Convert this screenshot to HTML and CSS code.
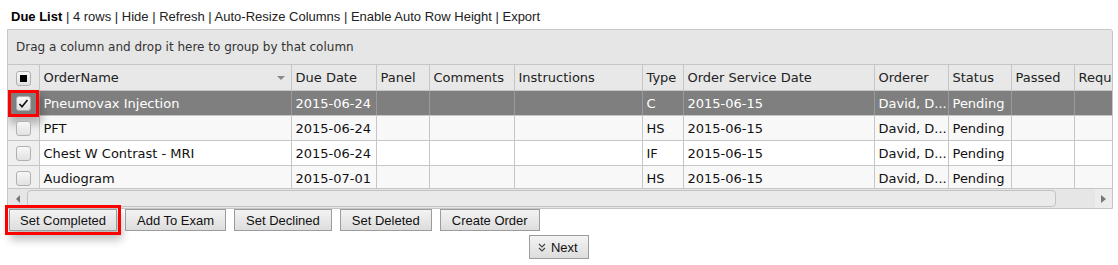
FILE: index.html
```html
<!DOCTYPE html>
<html>
<head>
  <title>Due List</title>
  <link rel="stylesheet" href="styles.css">
</head>
<body>
  <div class="toolbar">
    <b>Due List</b> | <a>4 rows</a> | <a>Hide</a> | <a>Refresh</a> | <a>Auto-Resize Columns</a> | <a>Enable Auto Row Height</a> | <a>Export</a>
  </div>

  <div class="grid">
    <div class="group-panel">Drag a column and drop it here to group by that column</div>
    <div class="grid-view">
      <table class="grid-table">
        <colgroup>
          <col style="width:31px">
          <col style="width:252px">
          <col style="width:85px">
          <col style="width:53px">
          <col style="width:85px">
          <col style="width:128px">
          <col style="width:41px">
          <col style="width:191px">
          <col style="width:74px">
          <col style="width:63px">
          <col style="width:63px">
          <col style="width:120px">
        </colgroup>
        <thead>
          <tr>
            <th class="chk-cell"><span class="checkbox partial"></span></th>
            <th class="sortable">OrderName <span class="sort-arrow"></span></th>
            <th>Due Date</th>
            <th>Panel</th>
            <th>Comments</th>
            <th>Instructions</th>
            <th>Type</th>
            <th>Order Service Date</th>
            <th>Orderer</th>
            <th>Status</th>
            <th>Passed</th>
            <th>Requested</th>
          </tr>
        </thead>
        <tbody>
          <tr class="selected">
            <td class="chk-cell"><span class="checkbox checked marked">
              <svg width="11" height="11" viewBox="0 0 11 11"><path d="M1.5 6 L4 8.8 L9.5 2" fill="none" stroke="#111" stroke-width="1.6"/></svg>
            </span></td>
            <td>Pneumovax Injection</td>
            <td>2015-06-24</td>
            <td></td>
            <td></td>
            <td></td>
            <td>C</td>
            <td>2015-06-15</td>
            <td>David, D...</td>
            <td>Pending</td>
            <td></td>
            <td></td>
          </tr>
          <tr class="alt">
            <td class="chk-cell"><span class="checkbox"></span></td>
            <td>PFT</td>
            <td>2015-06-24</td>
            <td></td>
            <td></td>
            <td></td>
            <td>HS</td>
            <td>2015-06-15</td>
            <td>David, D...</td>
            <td>Pending</td>
            <td></td>
            <td></td>
          </tr>
          <tr>
            <td class="chk-cell"><span class="checkbox"></span></td>
            <td>Chest W Contrast - MRI</td>
            <td>2015-06-24</td>
            <td></td>
            <td></td>
            <td></td>
            <td>IF</td>
            <td>2015-06-15</td>
            <td>David, D...</td>
            <td>Pending</td>
            <td></td>
            <td></td>
          </tr>
          <tr class="alt">
            <td class="chk-cell"><span class="checkbox"></span></td>
            <td>Audiogram</td>
            <td>2015-07-01</td>
            <td></td>
            <td></td>
            <td></td>
            <td>HS</td>
            <td>2015-06-15</td>
            <td>David, D...</td>
            <td>Pending</td>
            <td></td>
            <td></td>
          </tr>
        </tbody>
      </table>
    </div>
    <div class="hscroll">
      <span class="scroll-btn"><span class="arrow-left"></span></span>
      <span class="scroll-thumb"></span>
      <span class="scroll-btn right"><span class="arrow-right"></span></span>
    </div>
  </div>

  <div class="actions">
    <button class="btn marked">Set Completed</button>
    <button class="btn">Add To Exam</button>
    <button class="btn">Set Declined</button>
    <button class="btn">Set Deleted</button>
    <button class="btn">Create Order</button>
  </div>

  <div class="pager">
    <button class="btn next">
      <svg width="8" height="9" viewBox="0 0 8 9"><path d="M1 1 L4 4 L7 1 M1 5 L4 8 L7 5" fill="none" stroke="#444" stroke-width="1.1"/></svg>
      Next
    </button>
  </div>
</body>
</html>
```

FILE: styles.css
```css
body {
  margin: 0;
  font-family: "Liberation Sans", Arial, sans-serif;
  background: #fff;
  color: #111;
}

.toolbar {
  padding: 9px 0 0 11px;
  height: 20px;
  font-size: 13px;
  line-height: 16px;
  color: #222;
}

.toolbar b {
  color: #000;
}

.grid {
  margin-left: 7px;
  width: 1104px;
  border: 1px solid #c6c6c6;
  border-top-right-radius: 3px;
  background: #e6e6e6;
  font-family: "DejaVu Sans", Verdana, sans-serif;
  font-size: 13px;
}

.group-panel {
  height: 34px;
  line-height: 34px;
  padding-left: 8px;
  font-size: 12px;
  color: #333;
  border-bottom: 1px solid #c6c6c6;
}

.grid-view {
  height: 123px;
  overflow: hidden;
}

.grid-table {
  table-layout: fixed;
  width: 1186px;
  border-collapse: collapse;
}

.grid-table th,
.grid-table td {
  border-left: 1px solid #c6c6c6;
  border-bottom: 1px solid #c6c6c6;
  padding: 0 4px;
  text-align: left;
  white-space: nowrap;
  overflow: hidden;
}

.grid-table th {
  height: 25px;
  font-weight: normal;
  color: #222;
  background: #e8e8e8;
}

.grid-table td {
  height: 24px;
  background: #fff;
  color: #111;
}

.grid-table tr.alt td {
  background: #f8f8f8;
}

.grid-table tr.selected td {
  background: #7f7f7f;
  color: #fff;
  border-left-color: #9a9a9a;
}

.grid-table .chk-cell {
  border-left: none;
  padding: 0;
  text-align: center;
  overflow: visible;
}

.grid-table td.chk-cell,
.grid-table tr.alt td.chk-cell {
  background: #efefef;
}

.sortable {
  position: relative;
}

.sort-arrow {
  position: absolute;
  right: 6px;
  top: 11px;
  border-left: 4px solid transparent;
  border-right: 4px solid transparent;
  border-top: 4px solid #8a8a8a;
}

.checkbox {
  display: inline-block;
  width: 13px;
  height: 13px;
  border: 1px solid #b0b0b0;
  border-radius: 3px;
  background: linear-gradient(#f7f7f7, #e2e2e2);
  vertical-align: middle;
  position: relative;
}

.checkbox.partial::after {
  content: "";
  position: absolute;
  left: 3px;
  top: 3px;
  width: 7px;
  height: 7px;
  background: #000;
}

.checkbox svg {
  position: absolute;
  left: 1px;
  top: 1px;
}

.checkbox.marked::before {
  content: "";
  position: absolute;
  left: -9px;
  right: -9px;
  top: -7px;
  bottom: -7px;
  border: 3px solid #f00;
  box-shadow: 2px 6px 8px 1px rgba(0, 0, 0, 0.25);
}

.hscroll {
  display: flex;
  height: 19px;
  align-items: center;
  border-top: 1px solid #c6c6c6;
}

.scroll-btn {
  width: 19px;
  height: 19px;
  display: flex;
  align-items: center;
  justify-content: center;
}

.scroll-btn.right {
  width: 17px;
  margin-left: 39px;
  background: #ececec;
}

.arrow-left {
  border-top: 4px solid transparent;
  border-bottom: 4px solid transparent;
  border-right: 4px solid #777;
}

.arrow-right {
  border-top: 4px solid transparent;
  border-bottom: 4px solid transparent;
  border-left: 5px solid #777;
}

.scroll-thumb {
  flex: 1;
  height: 15px;
  border: 1px solid #c2c2c2;
  border-radius: 4px;
  background: #eaeaea;
}

.actions {
  display: flex;
  gap: 8px;
  padding: 0 0 0 9px;
}

.btn {
  height: 22px;
  padding: 0 11px;
  border: 1px solid #9c9c9c;
  background: linear-gradient(#f3f3f3, #dddddd);
  font-family: "Liberation Sans", Arial, sans-serif;
  font-size: 13px;
  color: #111;
}

.btn.marked {
  padding: 0 10px;
  outline: 3px solid #f00;
  outline-offset: 1px;
  box-shadow: 3px 7px 8px 2px rgba(0, 0, 0, 0.25);
}

.pager {
  display: flex;
  justify-content: center;
  padding-top: 4px;
}

.btn.next {
  height: 24px;
  padding: 0 10px 0 8px;
}

.btn.next svg {
  margin-right: 1px;
}
```
